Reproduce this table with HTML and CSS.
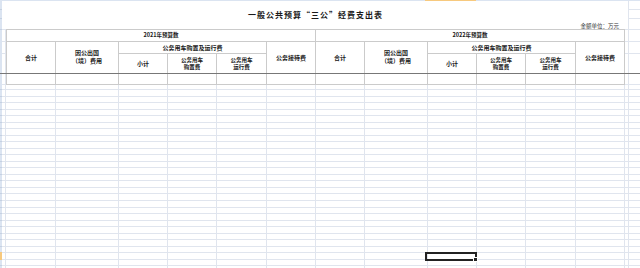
FILE: index.html
```html
<!DOCTYPE html>
<html lang="zh-CN">
<head>
<meta charset="utf-8">
<title>一般公共预算“三公”经费支出表</title>
<link rel="stylesheet" href="styles.css">
</head>
<body>
<div class="app">
  <div class="corner"></div>
  <div class="colhead"></div>
  <div class="rowhead"></div>
  <div class="sheet">
    <div class="title-area">
      <h1 class="title">一般公共预算“三公”经费支出表</h1>
      <div class="unit">金额单位：万元</div>
    </div>
    <div class="budget">
      <div class="c year">2021年预算数</div>
      <div class="c year">2022年预算数</div>

      <div class="c tall">合计</div>
      <div class="c tall two">因公出国<br>（境）费用</div>
      <div class="c car">公务用车购置及运行费</div>
      <div class="c tall">公务接待费</div>
      <div class="c tall">合计</div>
      <div class="c tall two">因公出国<br>（境）费用</div>
      <div class="c car">公务用车购置及运行费</div>
      <div class="c tall">公务接待费</div>

      <div class="c">小计</div>
      <div class="c sub">公务用车<br>购置费</div>
      <div class="c sub">公务用车<br>运行费</div>
      <div class="c">小计</div>
      <div class="c sub">公务用车<br>购置费</div>
      <div class="c sub">公务用车<br>运行费</div>

      <div class="c"></div><div class="c"></div><div class="c"></div>
      <div class="c"></div><div class="c"></div><div class="c"></div>
      <div class="c"></div><div class="c"></div><div class="c"></div>
      <div class="c"></div><div class="c"></div><div class="c"></div>
    </div>
  </div>
  <div class="freeze"></div>
  <div class="cursor"><span class="handle"></span></div>
</div>
</body>
</html>
```

FILE: styles.css
```css
:root {
  --g: #e0e5ee;
  --hd: #dbe4f1;
  --orange: #f7c97e;
}

html, body {
  margin: 0;
  padding: 0;
  background: #fff;
}

body {
  width: 640px;
  height: 268px;
  overflow: hidden;
  font-family: "Noto Sans CJK SC", "Noto Sans", sans-serif;
  color: #1a1a1a;
}

.app {
  position: relative;
  display: grid;
  grid-template-columns: 2px 638px;
  grid-template-rows: 1px 267px;
  width: 640px;
  height: 268px;
  overflow: hidden;
}

.corner {
  background: var(--hd);
}

.colhead {
  background: linear-gradient(to right,
    var(--hd) 423px, var(--orange) 423px 474px, var(--hd) 474px);
}

.rowhead {
  background:
    linear-gradient(to bottom, transparent 251px, var(--orange) 251px 259px, transparent 259px),
    repeating-linear-gradient(to bottom, #c5d1e2 0 1px, transparent 1px 6.53px) 0 88px / 100% 200px no-repeat,
    linear-gradient(to bottom, transparent 8px, #c5d1e2 8px 9px, transparent 9px 17px, #c5d1e2 17px 18px, transparent 18px 28px, #c5d1e2 28px 29px, transparent 29px),
    var(--hd);
}

.sheet {
  background:
    linear-gradient(to right,
      transparent 3px, var(--g) 3px 4px,
      transparent 4px 53px, var(--g) 53px 54px,
      transparent 54px 116px, var(--g) 116px 117px,
      transparent 117px 165px, var(--g) 165px 166px,
      transparent 166px 214px, var(--g) 214px 215px,
      transparent 215px 264px, var(--g) 264px 265px,
      transparent 265px 313px, var(--g) 313px 314px,
      transparent 314px 362px, var(--g) 362px 363px,
      transparent 363px 425px, var(--g) 425px 426px,
      transparent 426px 474px, var(--g) 474px 475px,
      transparent 475px 523px, var(--g) 523px 524px,
      transparent 524px 573px, var(--g) 573px 574px,
      transparent 574px 622px, var(--g) 622px 623px,
      transparent 623px 626px, var(--g) 626px 627px,
      transparent 627px),
    linear-gradient(to bottom,
      transparent 8px, var(--g) 8px 9px,
      transparent 9px 17px, var(--g) 17px 18px,
      transparent 18px 28px, var(--g) 28px 29px,
      transparent 29px 40px, var(--g) 40px 41px,
      transparent 41px 52px, var(--g) 52px 53px,
      transparent 53px 83px, var(--g) 83px 84px,
      transparent 84px) 0 0 / 100% 88px no-repeat,
    repeating-linear-gradient(to bottom, var(--g) 0 1px, transparent 1px 6.53px) 0 88px / 100% 200px no-repeat,
    #fff;
}

.title-area {
  width: 626px;
  height: 28px;
  box-sizing: border-box;
  padding-top: 9px;
  background: #fff;
  display: flex;
  flex-direction: column;
}

.title {
  margin: 0;
  font-size: 8px;
  line-height: 9px;
  font-weight: 700;
  letter-spacing: 1px;
  text-align: center;
  padding-left: 1px;
}

.unit {
  margin-top: 4px;
  font-size: 5.5px;
  line-height: 6px;
  text-align: right;
  padding-right: 9px;
  color: #333;
}

.budget {
  display: grid;
  grid-template-columns: 48px 62px 48px 48px 49px 48px 48px 62px 48px 48px 49px 48px;
  grid-template-rows: 11px 11px 19px 10px;
  gap: 1px;
  padding: 1px;
  margin-left: 4px;
  width: max-content;
  background: #cbcbcb;
}

.c {
  background: #fff;
  display: flex;
  align-items: center;
  justify-content: center;
  text-align: center;
  font-size: 6px;
  line-height: 7px;
  font-weight: 700;
  white-space: nowrap;
}

.year {
  grid-column: span 6;
  font-size: 5.5px;
}

.tall {
  grid-row: span 2;
}

.two {
  line-height: 8px;
  padding-bottom: 1px;
}

.car {
  grid-column: span 3;
}

.sub {
  font-size: 5.5px;
  line-height: 7px;
  padding-top: 1px;
}

.freeze {
  position: absolute;
  left: 0;
  top: 73px;
  width: 640px;
  height: 1px;
  background: #777;
}

.cursor {
  position: absolute;
  left: 425px;
  top: 252px;
  width: 48px;
  height: 5px;
  border: 2px solid #222;
}

.handle {
  position: absolute;
  right: -3px;
  bottom: -3px;
  width: 3px;
  height: 3px;
  background: #222;
  border: 1px solid #fff;
}
```
